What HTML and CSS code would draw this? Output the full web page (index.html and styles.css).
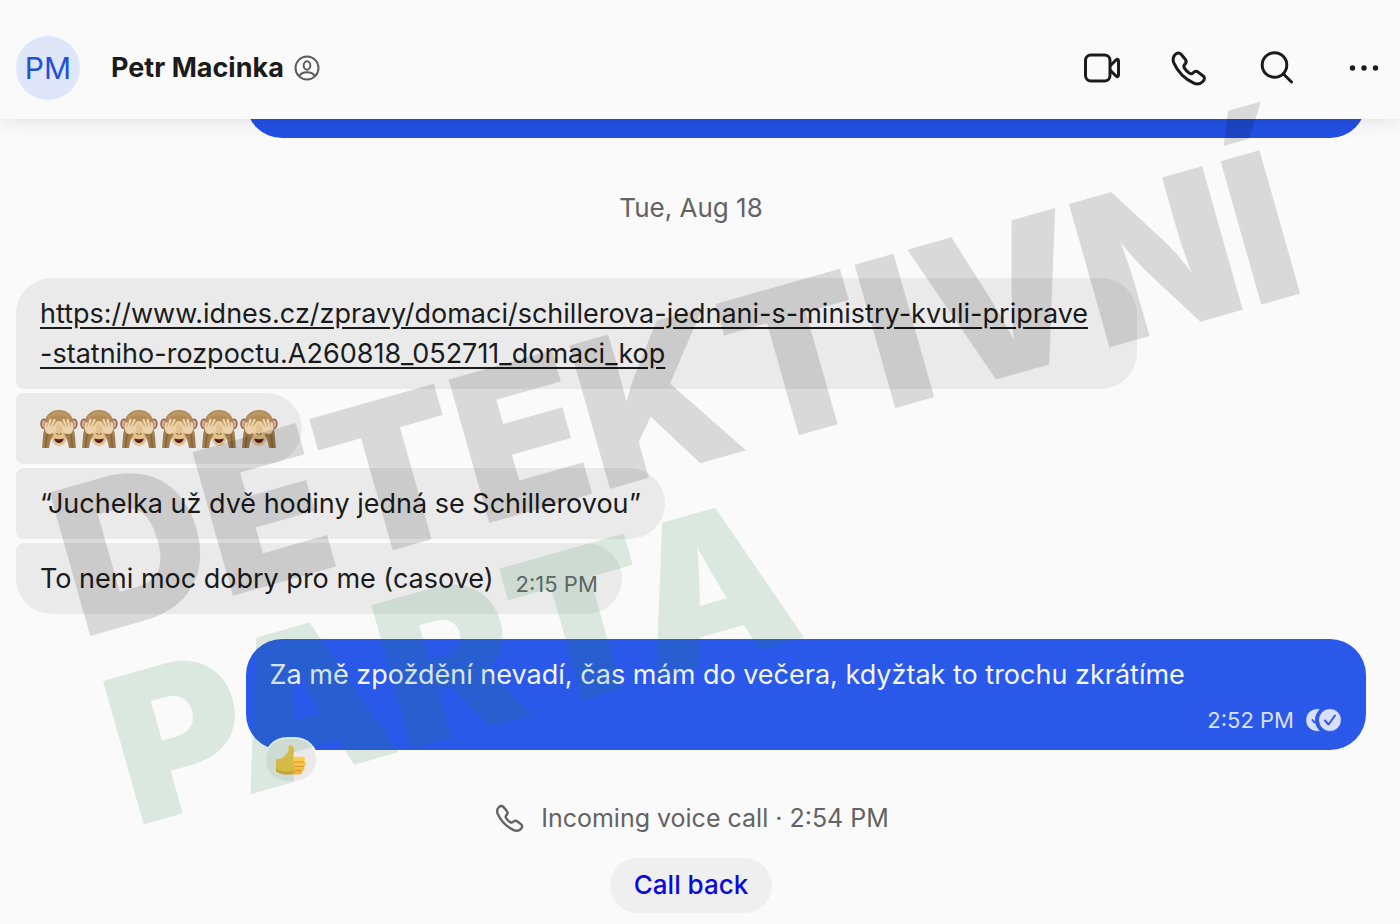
FILE: index.html
```html
<!DOCTYPE html>
<html lang="cs">
    <head>
        <meta charset="utf-8">
        <title>Petr Macinka</title>
        <meta name="viewport" content="width=device-width, initial-scale=1">
        <link rel="stylesheet" href="styles.css">
    </head>
    <body>
        <!-- Shared drawings -->
        <svg class="defs" aria-hidden="true">
            <symbol id="phone" viewBox="0 0 40 40">
                <path d="M7.200 6.600c1.600-1.800 4-2.300 5.900-.4l4.300 5.300c1.300 1.700.9 3.400-.6 4.900-1.300 1.300-1.300 2.300-.4 3.700 1.400 2.200 2.900 3.700 5.100 5.100 1.400.9 2.500.8 3.700-.5 1.500-1.500 3.200-1.900 4.900-.6l5.100 3.900c1.900 1.600 1.400 3.800-.3 5.500-2.600 2.600-5.800 3.100-9.100 1.600C17 31 9.900 24 5.800 14.800c-1.200-2.900-.7-5.800 1.400-8.200z"/>
            </symbol>
            <symbol id="monkey" viewBox="0 0 36 36">
                <ellipse cx="3.700" cy="13" rx="3.400" ry="5" fill="#86643f"/>
                <ellipse cx="32.300" cy="13" rx="3.400" ry="5" fill="#86643f"/>
                <ellipse cx="3.500" cy="13" rx="1.800" ry="3.500" fill="#e5a3a0"/>
                <ellipse cx="32.500" cy="13" rx="1.800" ry="3.500" fill="#e5a3a0"/>
                <path d="M18 0C9.500 0 4 6 4 14c0 5 2 9 5 12h18c3-3 5-7 5-12C32 6 26.500 0 18 0z" fill="#b18c58"/>
                <path d="M18 1.500C12.500 1.500 8.500 4 7 9c3-3 7-4 11-4s8 1 11 4c-1.500-5-5.500-7.500-11-7.500z" fill="#bc9660"/>
                <path d="M17 10.500h2L25 22c1 6-1.500 12-7 12s-8-6-7-12z" fill="#e2c18f"/>
                <path d="M16 22.300l1 .8M20 22.300l-1 .8" stroke="#79522f" stroke-width="1"/>
                <path d="M13.500 27q4.500 1.200 9 0-.8 4.200-4.500 4.200T13.500 27z" fill="#5b201c"/>
                <path d="M4 18C2.500 25 2.500 31 2 36h6.500c1-6 2-9 4.500-13l-3-3z" fill="#a17c4b"/>
                <path d="M32 18c1.500 7 1.500 13 2 18h-6.500c-1-6-2-9-4.500-13l3-3z" fill="#a17c4b"/>
                <path d="M6.500 24c-.5 4-1 8-1.200 12M29.500 24c.5 4 1 8 1.200 12" stroke="#876439" stroke-width="1.500"/>
                <g id="hand" stroke="#ecd2aa" stroke-linecap="round">
                    <path d="M4.500 16l4-1 5 0 2 3c-.5 3-3 4.500-6 4.700-3.500 0-5-2.500-5-6.700z" fill="#ecd2aa" stroke="none"/>
                    <path d="M5.500 17l.7-4.500M8 16l1.800-6.500M10.500 16.500l3.200-7M12.500 18l4-6" stroke-width="2.400"/>
                    <path d="M7 15.500l.9-4M9.700 15l1.800-4.500M12 16l2.300-4.500" stroke="#c9a676" stroke-width=".7"/>
                </g>
                <use href="#hand" transform="matrix(-1 0 0 1 36 0)"/>
            </symbol>
        </svg>

        <header class="header">
            <div class="avatar">PM</div>
            <h1 class="name">Petr Macinka</h1>
            <svg class="contact" viewBox="0 0 26 26" aria-hidden="true">
                <circle cx="13" cy="13" r="11.500"/>
                <ellipse cx="13" cy="10.500" rx="3.300" ry="4.200"/>
                <path d="M5.500 20.800c1.500-2.600 4.300-3.500 7.500-3.500s6 .9 7.500 3.500"/>
            </svg>
            <nav class="actions">
                <button aria-label="Video call">
                    <svg viewBox="0 0 40 40">
                        <rect x="5.500" y="7" width="24.500" height="26" rx="5.500"/>
                        <path d="M30.500 17.500l5.500-5.500c1.300-1.200 2.500-.6 2.500 1v14c0 1.600-1.200 2.200-2.500 1l-5.500-5.500"/>
                    </svg>
                </button>
                <button aria-label="Voice call"><svg viewBox="0 0 40 40"><use href="#phone"/></svg></button>
                <button aria-label="Search">
                    <svg viewBox="0 0 40 40"><circle cx="18.500" cy="17" r="12.300"/><path d="M27.500 26l8 8"/></svg>
                </button>
                <button aria-label="More">
                    <svg class="dots" viewBox="0 0 40 40"><circle cx="8.500" cy="20" r="2.700"/><circle cx="20" cy="20" r="2.700"/><circle cx="31.500" cy="20" r="2.700"/></svg>
                </button>
            </nav>
        </header>

        <main class="chat">
            <div class="bubble outgoing previous"></div>
            <div class="date">Tue, Aug 18</div>

            <div class="group">
                <div class="bubble incoming first"><a href="https://www.idnes.cz/zpravy/domaci/schillerova-jednani-s-ministry-kvuli-priprave-statniho-rozpoctu.A260818_052711_domaci_kop">https://www.idnes.cz/zpravy/domaci/schillerova-jednani-s-ministry-kvuli-priprave<br>-statniho-rozpoctu.A260818_052711_domaci_kop</a></div>
                <div class="bubble incoming monkeys">
                    <svg role="img" aria-label="🙈"><use href="#monkey"/></svg>
                    <svg role="img" aria-label="🙈"><use href="#monkey"/></svg>
                    <svg role="img" aria-label="🙈"><use href="#monkey"/></svg>
                    <svg role="img" aria-label="🙈"><use href="#monkey"/></svg>
                    <svg role="img" aria-label="🙈"><use href="#monkey"/></svg>
                    <svg role="img" aria-label="🙈"><use href="#monkey"/></svg>
                </div>
                <div class="bubble incoming">“Juchelka už dvě hodiny jedná se Schillerovou”</div>
                <div class="bubble incoming last">
                    <span>To neni moc dobry pro me (casove)</span>
                    <span class="time">2:15 PM</span>
                </div>
            </div>

            <div class="bubble outgoing">
                Za mě zpoždění nevadí, čas mám do večera, kdyžtak to trochu zkrátíme
                <div class="meta">
                    <span>2:52 PM</span>
                    <svg viewBox="0 0 36 24" role="img" aria-label="Read">
                        <path d="M14.500 1A11.500 11.500 0 1 0 14.500 23 14.500 14.500 0 0 1 14.500 1z"/>
                        <path class="tick" d="M6.500 12l2 2.500"/>
                        <circle cx="24" cy="12" r="11.500"/>
                        <path class="tick" d="M19 12.500l3.500 4 6.500-9"/>
                    </svg>
                </div>
                <div class="reaction">
                    <svg viewBox="0 0 32 32" role="img" aria-label="👍">
                        <path d="M1 15.500c4-.2 7-1.800 9.500-4.200C13 9 14 6 13.700 2.500 13.700.5 18 .6 18.800 4c.6 3-.3 6-.8 9l1.500 15c-4 2-9 2-13 0-2 0-4-1-5.500-3z" fill="#f3c545"/>
                        <path d="M1 24c3 3.500 9 4.500 18.500 3l-1 3C12 31.500 5 30.500 1 27.500z" fill="#e0a935"/>
                        <rect x="17" y="12.700" width="13" height="5.500" rx="2.700" fill="#fbce4d"/>
                        <rect x="17.500" y="17.500" width="13.500" height="5.200" rx="2.600" fill="#f9c544"/>
                        <rect x="17.500" y="22" width="12" height="4.800" rx="2.400" fill="#f6bd3c"/>
                        <rect x="17.500" y="26.200" width="9.500" height="4.300" rx="2.100" fill="#efb136"/>
                        <path d="M19.500 18h9M20 22.400h8.500M20 26.500h7" stroke="#cf9033" stroke-width=".9"/>
                    </svg>
                </div>
            </div>

            <div class="call">
                <svg viewBox="0 0 40 40" aria-hidden="true"><use href="#phone"/></svg>
                <span>Incoming voice call · 2:54 PM</span>
            </div>
            <button class="callback">Call back</button>
        </main>

        <div class="watermark">
            <div>DETEKTIVNÍ</div>
            <div class="green">PARTA</div>
        </div>
    </body>
</html>
```
FILE: styles.css
```css
* {
    box-sizing: border-box;
}
body {
    position: relative;
    margin: 0;
    min-height: 100vh;
    overflow: hidden;
    background-color: #fafafa;
    color: #1b1b1b;
    font-family: Inter, sans-serif;
    font-size: 27px;
    line-height: 40px;
}
button {
    border: none;
    padding: 0;
    background: none;
    color: inherit;
    font: inherit;
    cursor: pointer;
}
svg {
    display: block;
    fill: none;
    stroke: currentColor;
    stroke-linecap: round;
    stroke-linejoin: round;
}
.defs {
    position: absolute;
    width: 0;
    height: 0;
}

/* Header */
.header {
    position: relative;
    z-index: 1;
    display: flex;
    align-items: center;
    padding: 36px 16px 19px;
    background-color: #fafafa;
    box-shadow: 0 0 20px rgba(0, 0, 0, 0.12);
}
.avatar {
    width: 64px;
    height: 64px;
    margin-right: 31px;
    border-radius: 50%;
    background-color: #dfe6fa;
    color: #2450d6;
    font-size: 30px;
    line-height: 64px;
    text-align: center;
}
.name {
    margin: 0;
    font-size: 27px;
    font-weight: 700;
}
.contact {
    width: 26px;
    height: 26px;
    margin-left: 10px;
    color: #5c5c5c;
    stroke-width: 2;
}
.actions {
    display: flex;
    gap: 48px;
    margin-left: auto;
}
.actions svg {
    width: 40px;
    height: 40px;
    stroke-width: 3;
}
.actions .dots {
    fill: currentColor;
    stroke: none;
}

/* Messages */
.chat {
    display: flex;
    flex-direction: column;
    align-items: center;
    padding: 0 34px 12px 16px;
}
.date {
    margin: 50px 0;
    color: #636363;
    font-size: 26px;
}
.group {
    display: flex;
    flex-direction: column;
    align-items: flex-start;
    gap: 4px;
    width: 100%;
    margin-bottom: 25px;
}
.bubble {
    max-width: 83%;
    padding: 16px 24px 15px;
    border-radius: 36px;
}
.incoming {
    border-radius: 8px 36px 36px 8px;
    background-color: #eaeaea;
}
.incoming a {
    color: inherit;
    text-underline-offset: 4px;
    word-break: break-all;
}
.first {
    width: 83%;
    border-top-left-radius: 36px;
}
.last {
    display: flex;
    align-items: flex-end;
    gap: 22px;
    border-bottom-left-radius: 36px;
}
.monkeys {
    display: flex;
    gap: 2px;
}
.monkeys svg {
    width: 38px;
    height: 38px;
    margin: 1px 0;
    stroke: none;
}
.time {
    color: #636363;
    font-size: 22px;
    line-height: 30px;
}
.outgoing {
    position: relative;
    align-self: flex-end;
    width: 83%;
    background-color: #2a58e8;
    color: #f2f5ff;
}
.previous {
    height: 111px;
    margin-top: -92px;
    background-color: #2250e3;
}
.meta {
    display: flex;
    justify-content: flex-end;
    align-items: center;
    gap: 12px;
    margin-top: 10px;
    color: #d9e0fb;
    font-size: 22px;
    line-height: 30px;
}
.meta svg {
    width: 36px;
    height: 24px;
    fill: #d9e0fb;
    stroke: #2a58e8;
    stroke-width: 1;
}
.meta .tick {
    fill: none;
    stroke-width: 2;
}
.reaction {
    position: absolute;
    left: 18px;
    bottom: -33px;
    padding: 5px 9px;
    border: 2px solid #fafafa;
    border-radius: 24px;
    background-color: #eaeaea;
}
.reaction svg {
    width: 32px;
    height: 32px;
    stroke: none;
}
.call {
    display: flex;
    align-items: center;
    gap: 16px;
    margin: 48px 0 20px;
    color: #636363;
    font-size: 25px;
}
.call svg {
    width: 32px;
    height: 32px;
    stroke-width: 3;
}
.callback {
    padding: 7px 24px 8px;
    border-radius: 28px;
    background-color: #efefef;
    color: #0a0ae0;
    font-size: 26px;
    font-weight: 500;
}

.watermark {
    position: absolute;
    z-index: 2;
    left: 34px;
    top: 472px;
    color: rgba(0, 0, 0, 0.13);
    font-size: 205px;
    font-weight: 900;
    line-height: 196px;
    white-space: nowrap;
    pointer-events: none;
    transform: rotate(-15.8deg);
    transform-origin: 0 0;
}
.green {
    color: rgba(43, 137, 83, 0.15);
}
```
